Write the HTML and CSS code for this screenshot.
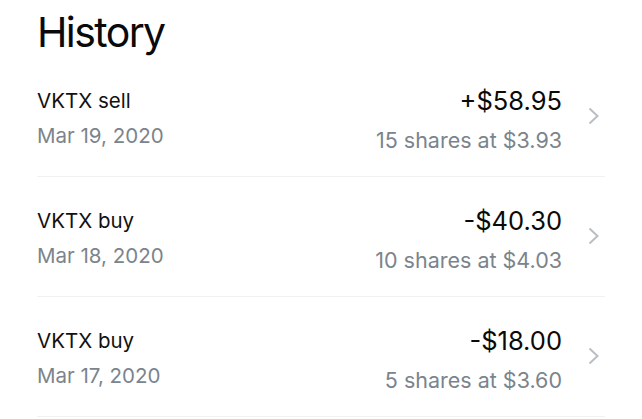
FILE: index.html
```html
<!DOCTYPE html>
<html>
<head>
<meta charset="utf-8">
<link rel="stylesheet" href="styles.css">
</head>
<body>
<div class="page">
  <h1 class="title">History</h1>
  <div class="row">
    <div class="left">
      <div class="name">VKTX sell</div>
      <div class="date">Mar 19, 2020</div>
    </div>
    <div class="right">
      <div class="amount">+$58.95</div>
      <div class="shares">15 shares at $3.93</div>
    </div>
    <svg class="chev" width="12" height="18" viewBox="0 0 12 18"><path d="M1.5 1.5 L9.5 9 L1.5 16.5" fill="none" stroke="#babfc4" stroke-width="2"/></svg>
  </div>
  <div class="row">
    <div class="left">
      <div class="name">VKTX buy</div>
      <div class="date">Mar 18, 2020</div>
    </div>
    <div class="right">
      <div class="amount">-$40.30</div>
      <div class="shares">10 shares at $4.03</div>
    </div>
    <svg class="chev" width="12" height="18" viewBox="0 0 12 18"><path d="M1.5 1.5 L9.5 9 L1.5 16.5" fill="none" stroke="#babfc4" stroke-width="2"/></svg>
  </div>
  <div class="row">
    <div class="left">
      <div class="name">VKTX buy</div>
      <div class="date">Mar 17, 2020</div>
    </div>
    <div class="right">
      <div class="amount">-$18.00</div>
      <div class="shares">5 shares at $3.60</div>
    </div>
    <svg class="chev" width="12" height="18" viewBox="0 0 12 18"><path d="M1.5 1.5 L9.5 9 L1.5 16.5" fill="none" stroke="#babfc4" stroke-width="2"/></svg>
  </div>
</div>
</body>
</html>
```
FILE: styles.css
```css
html, body {
  margin: 0;
  padding: 0;
  background: #ffffff;
}
body {
  font-family: Inter, Roboto, "Liberation Sans", sans-serif;
  color: #111;
}
.page {
  padding: 0 37px;
}
.title {
  margin: 7px 0 0;
  font-size: 41px;
  font-weight: 400;
  line-height: 50px;
  color: #0a0a0a;
  letter-spacing: -1.6px;
}
.row {
  display: flex;
  align-items: flex-start;
  height: 120px;
  box-sizing: border-box;
  padding: 27px 5px 0 0;
  border-bottom: 1px solid #f1f1f1;
  overflow: hidden;
}
.left {
  flex: 1;
}
.name {
  font-size: 20.5px;
  line-height: 34px;
  color: #111;
}
.date {
  margin-top: 1px;
  font-size: 20.5px;
  line-height: 34px;
  color: #7b848c;
}
.right {
  text-align: right;
}
.amount {
  font-size: 25.5px;
  line-height: 34px;
  color: #0a0a0a;
}
.shares {
  margin-top: 2px;
  font-size: 21.5px;
  line-height: 40px;
  color: #7b848c;
}
.chev {
  margin-left: 26px;
  margin-top: 23px;
  flex: none;
}
```
